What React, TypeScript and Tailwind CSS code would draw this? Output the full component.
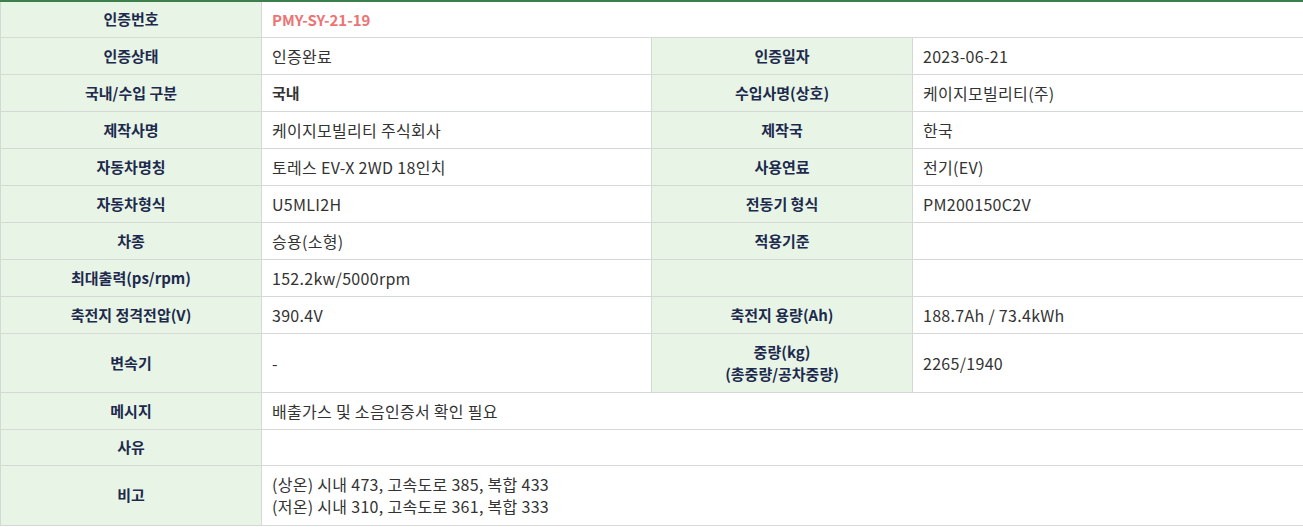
import React from "react";

type Row = {
  label: React.ReactNode;
  value: React.ReactNode;
  label2?: React.ReactNode;
  value2?: React.ReactNode;
  span?: boolean;
  h?: string;
};

const rows: Row[] = [
  {
    label: "인증번호",
    value: <span className="font-bold tracking-normal text-[15px] text-[#ec7474]">PMY-SY-21-19</span>,
    span: true,
    h: "h-[36px]",
  },
  { label: "인증상태", value: "인증완료", label2: "인증일자", value2: "2023-06-21" },
  {
    label: "국내/수입 구분",
    value: <span className="font-bold text-[15px] tracking-normal">국내</span>,
    label2: "수입사명(상호)",
    value2: "케이지모빌리티(주)",
  },
  { label: "제작사명", value: "케이지모빌리티 주식회사", label2: "제작국", value2: "한국" },
  { label: "자동차명칭", value: "토레스 EV-X 2WD 18인치", label2: "사용연료", value2: "전기(EV)" },
  { label: "자동차형식", value: "U5MLI2H", label2: "전동기 형식", value2: "PM200150C2V" },
  { label: "차종", value: "승용(소형)", label2: "적용기준", value2: "" },
  { label: "최대출력(ps/rpm)", value: "152.2kw/5000rpm", label2: "", value2: "" },
  { label: "축전지 정격전압(V)", value: "390.4V", label2: "축전지 용량(Ah)", value2: "188.7Ah / 73.4kWh" },
  {
    label: "변속기",
    value: "-",
    label2: (
      <>
        중량(kg)
        <br />
        (총중량/공차중량)
      </>
    ),
    value2: "2265/1940",
    h: "h-[59px]",
  },
  { label: "메시지", value: "배출가스 및 소음인증서 확인 필요", span: true },
  { label: "사유", value: "", span: true, h: "h-[36px]" },
  {
    label: "비고",
    value: (
      <>
        (상온) 시내 473, 고속도로 385, 복합 433
        <br />
        (저온) 시내 310, 고속도로 361, 복합 333
      </>
    ),
    span: true,
    h: "h-[60px]",
  },
];

const th = "border border-[#d5d9d5] bg-[#e8f5e6] text-center font-bold text-[#1d2a4d] px-2 py-0";
const td =
  "border border-[#d5d9d5] bg-white text-left text-[#333333] text-[16px] tracking-[0.3px] pl-[10px] pr-2 py-0";

export default function App() {
  return (
    <div
      className="w-[1303px] bg-white text-[15px] leading-[22px]"
      style={{ fontFamily: '"Noto Sans CJK KR", "Noto Sans", sans-serif' }}
    >
      <table className="w-full table-fixed border-collapse border-t-2 border-t-[#3c7f4c]">
        <colgroup>
          <col className="w-[261px]" />
          <col className="w-[390px]" />
          <col className="w-[261px]" />
          <col className="w-[391px]" />
        </colgroup>
        <tbody>
          {rows.map((r, i) => (
            <tr key={i} className={r.h ?? "h-[37px]"}>
              <th className={th}>{r.label}</th>
              {r.span ? (
                <td className={td} colSpan={3}>
                  {r.value}
                </td>
              ) : (
                <>
                  <td className={td}>{r.value}</td>
                  <th className={th}>{r.label2}</th>
                  <td className={td}>{r.value2}</td>
                </>
              )}
            </tr>
          ))}
        </tbody>
      </table>
    </div>
  );
}
